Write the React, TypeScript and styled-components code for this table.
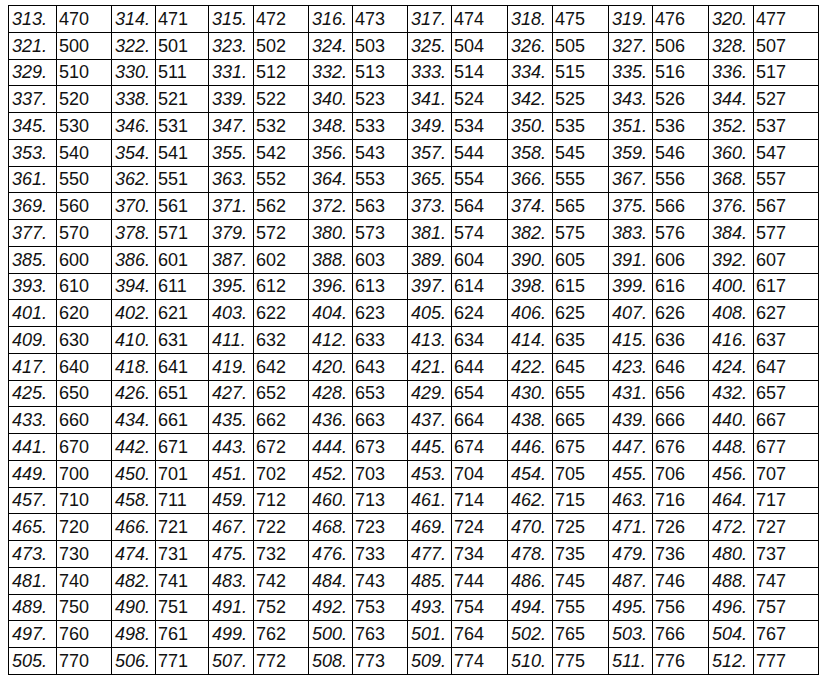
import React from "react";
import styled, { createGlobalStyle } from "styled-components";

const GlobalStyle = createGlobalStyle`
  body {
    margin: 0;
    background: #fff;
  }
`;

const FIRST = 313;
const LAST = 512;
const widths = [48, 55, 44, 53, 45, 55, 44, 55, 44, 56, 45, 56, 44, 56, 45, 65];

const Grid = styled.div`
  display: grid;
  grid-template-columns: ${widths.map(w => `${w}px`).join(" ")};
  grid-auto-rows: 26.75px;
  width: max-content;
  margin: 5px 0 0 8px;
  border-top: 1px solid #000;
  border-left: 1px solid #000;
  font-family: "Liberation Sans", Arial, sans-serif;
  font-size: 18px;
  color: #111;
`;

const Cell = styled.div<{ $index?: boolean }>`
  box-sizing: border-box;
  display: flex;
  align-items: center;
  padding: 1px 0 0 ${p => (p.$index ? "3px" : "2px")};
  border-right: 1px solid #000;
  border-bottom: 1px solid #000;
  font-style: ${p => (p.$index ? "italic" : "normal")};
  white-space: nowrap;
  overflow: hidden;
`;

const numbers = Array.from({ length: LAST - FIRST + 1 }, (_, i) => FIRST + i);

const App = (): JSX.Element => (
  <>
    <GlobalStyle />
    <Grid>
      {numbers.map(n => (
        <React.Fragment key={n}>
          <Cell $index>{n}.</Cell>
          <Cell>{(n - 1).toString(8)}</Cell>
        </React.Fragment>
      ))}
    </Grid>
  </>
);

export default App;
